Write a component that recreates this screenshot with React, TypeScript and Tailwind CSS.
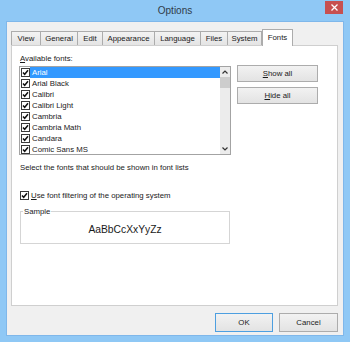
import React from "react";

const fonts = [
  "Arial",
  "Arial Black",
  "Calibri",
  "Calibri Light",
  "Cambria",
  "Cambria Math",
  "Candara",
  "Comic Sans MS",
];

function Check() {
  return (
    <svg width="9" height="9" viewBox="0 0 9 9" className="shrink-0">
      <rect x="0.5" y="0.5" width="8" height="8" fill="white" stroke="#3a3a3a" />
      <path d="M2 4.4 L3.7 6.3 L7 2.3" fill="none" stroke="#111" strokeWidth="1.5" />
    </svg>
  );
}

const tabs: { label: string; w: string }[] = [
  { label: "View", w: "w-[29px]" },
  { label: "General", w: "w-[37px]" },
  { label: "Edit", w: "w-[25px]" },
  { label: "Appearance", w: "w-[52px]" },
  { label: "Language", w: "w-[46px]" },
  { label: "Files", w: "w-[27px]" },
  { label: "System", w: "w-[35px] border-r" },
];

function Btn({ children, def }: { children: React.ReactNode; def?: boolean }) {
  return (
    <div
      className={
        "flex items-center justify-center border bg-linear-to-b from-[#f2f2f2] to-[#e3e3e3] " +
        (def ? "border-[#4d9fe0]" : "border-[#acacac]")
      }
    >
      {children}
    </div>
  );
}

export default function App() {
  return (
    <div className="w-[350px] h-[342px] bg-[#8fc8f5] flex flex-col font-['Liberation_Sans',Arial,sans-serif] text-[7.8px] leading-[11px] text-[#1a1a1a]">
      <div className="h-[21px] relative flex items-center justify-center shrink-0">
        <span className="text-[10px] text-[#2f3b48]">Options</span>
        <div className="absolute right-[7px] top-[1px] w-[18px] h-[13px] bg-[#c75050] flex items-center justify-center">
          <svg width="7" height="7" viewBox="0 0 7 7">
            <path d="M0.5 0.5 L6.5 6.5 M6.5 0.5 L0.5 6.5" stroke="white" strokeWidth="1.3" />
          </svg>
        </div>
      </div>
      <div className="flex-1 mx-[6px] mb-[6px] bg-[#f0f0f0] border border-[#7fb7ea] flex flex-col">
        <div className="mt-[7px] ml-[4px] mr-[5px] h-[16px] flex items-end shrink-0">
          {tabs.map((t) => (
            <div
              key={t.label}
              className={
                "h-[14px] flex items-center justify-center border-l border-t border-[#acacac] bg-linear-to-b from-[#f3f3f3] to-[#e4e4e4] " +
                t.w
              }
            >
              {t.label}
            </div>
          ))}
          <div className="relative z-10 -mb-px h-[17px] w-[31px] flex items-center justify-center border-l border-t border-r border-[#acacac] bg-white pb-[2px]">
            Fonts
          </div>
        </div>
        <div className="ml-[4px] mr-[5px] flex-1 bg-white border border-[#cfcfcf] flex flex-col pl-[7px]">
          <div className="mt-[7px] ml-px">
            <span className="underline">A</span>vailable fonts:
          </div>
          <div className="mt-[2px] flex items-start">
            <div className="w-[212px] h-[89px] border border-[#a3a3a3] flex">
              <div className="flex-1 flex flex-col">
                {fonts.map((f, i) => (
                  <div key={f} className="h-[11px] flex items-center pl-px">
                    <Check />
                    <div
                      className={
                        "flex-1 h-[11px] flex items-center pl-[2px] " +
                        (i === 0 ? "bg-[#3399ff] text-white" : "")
                      }
                    >
                      {f}
                    </div>
                  </div>
                ))}
              </div>
              <div className="w-[10px] bg-[#ececec] flex flex-col">
                <div className="h-[10px] flex items-center justify-center">
                  <svg width="6" height="4" viewBox="0 0 6 4">
                    <path d="M0.5 3.5 L3 1 L5.5 3.5" fill="none" stroke="#333" strokeWidth="1.2" />
                  </svg>
                </div>
                <div className="h-[11px] bg-[#cdcdcd]" />
                <div className="flex-1" />
                <div className="h-[10px] flex items-center justify-center">
                  <svg width="6" height="4" viewBox="0 0 6 4">
                    <path d="M0.5 0.5 L3 3 L5.5 0.5" fill="none" stroke="#333" strokeWidth="1.2" />
                  </svg>
                </div>
              </div>
            </div>
            <div className="ml-[6px] -mt-px w-[81px] flex flex-col gap-[5px]">
              <div className="h-[17px] flex flex-col">
                <Btn>
                  <span className="h-[15px] flex items-center">
                    <span className="underline">S</span>how all
                  </span>
                </Btn>
              </div>
              <div className="h-[17px] flex flex-col">
                <Btn>
                  <span className="h-[15px] flex items-center">
                    <span className="underline">H</span>ide all
                  </span>
                </Btn>
              </div>
            </div>
          </div>
          <div className="mt-[7px] ml-px">Select the fonts that should be shown in font lists</div>
          <div className="mt-[17px] ml-px flex items-center gap-[2px] h-[11px]">
            <Check />
            <span>
              <span className="underline">U</span>se font filtering of the operating system
            </span>
          </div>
          <div className="mt-[10px] ml-px w-[210px] h-[33px] border border-[#d5d5d5] relative flex items-center justify-center pt-[3px]">
            <span className="absolute left-[2px] -top-[6px] bg-white px-[1px]">Sample</span>
            <span className="text-[10.3px] leading-[13px]">AaBbCcXxYyZz</span>
          </div>
        </div>
        <div className="mt-[7px] mb-[3px] mr-[5px] h-[19px] flex justify-end gap-[6px] shrink-0">
          <div className="w-[58px] flex flex-col">
            <Btn def>
              <span className="h-[17px] flex items-center">OK</span>
            </Btn>
          </div>
          <div className="w-[59px] flex flex-col">
            <Btn>
              <span className="h-[17px] flex items-center">Cancel</span>
            </Btn>
          </div>
        </div>
      </div>
    </div>
  );
}
